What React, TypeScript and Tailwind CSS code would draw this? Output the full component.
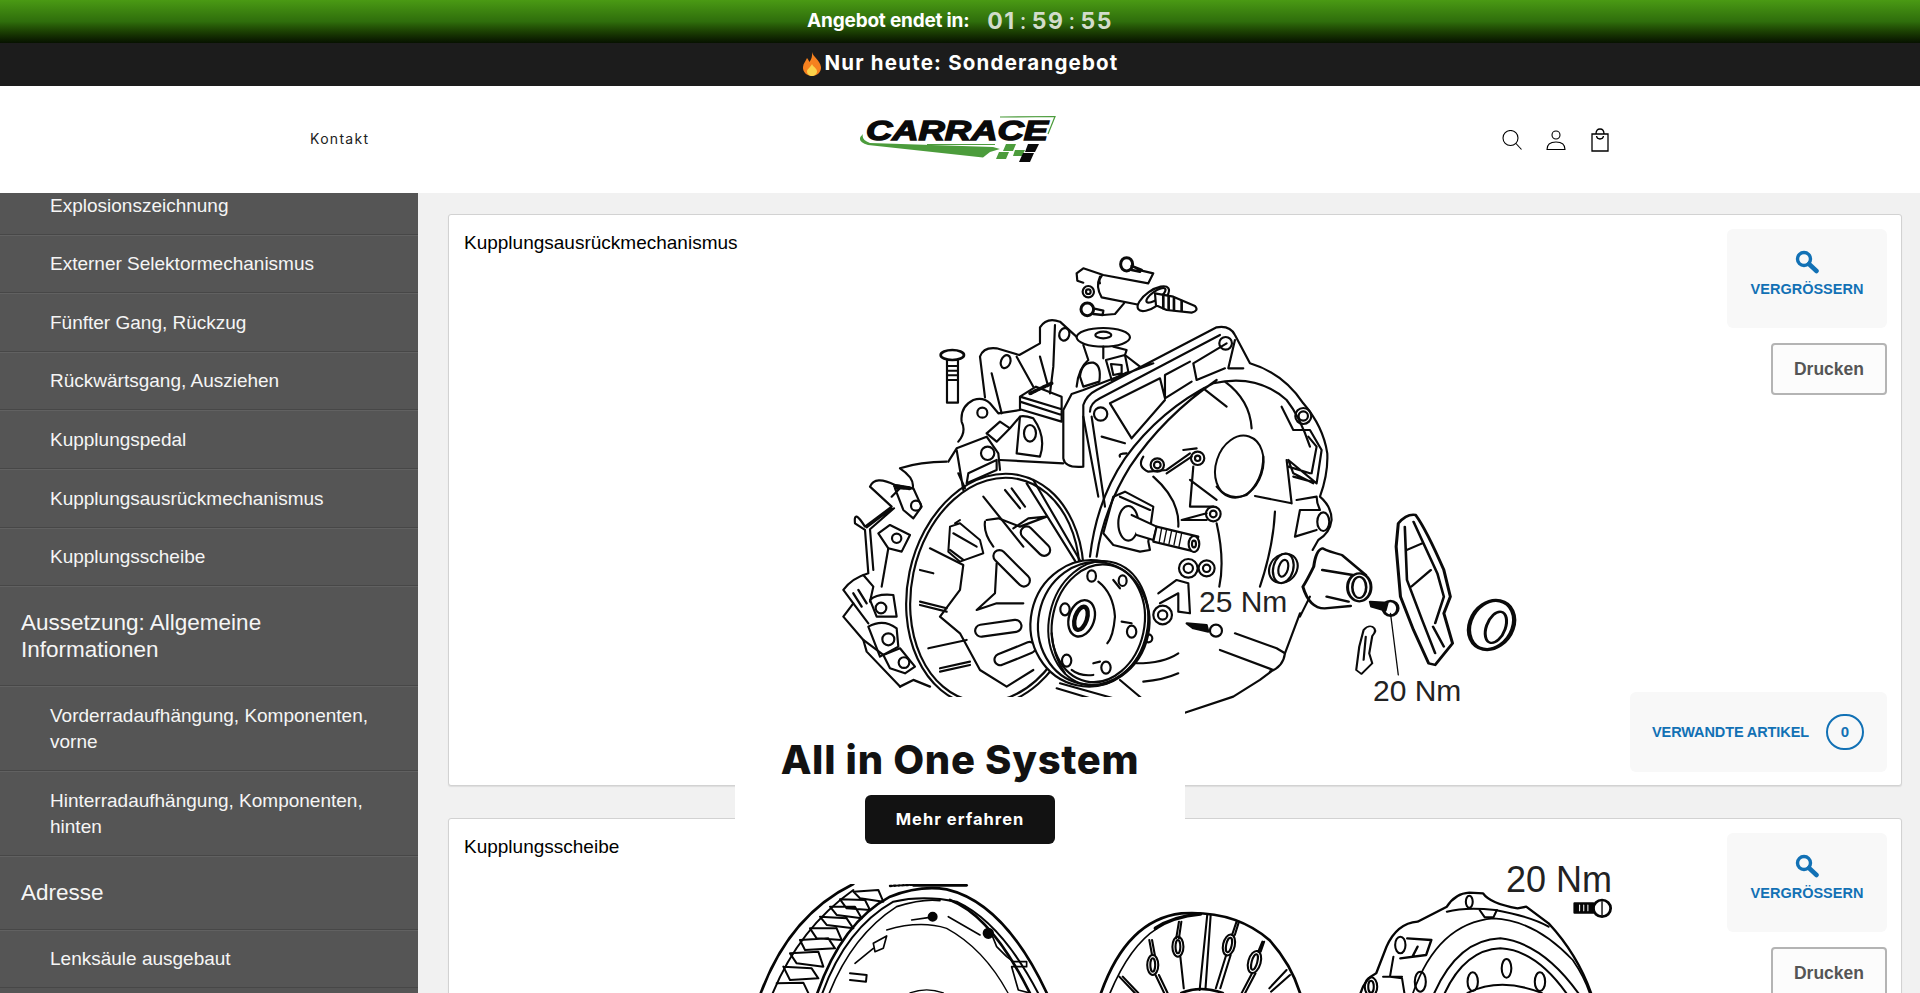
const sidebarRows = [
  { label: "Explosionszeichnung" },
  { label: "Externer Selektormechanismus" },
  { label: "Fünfter Gang, Rückzug" },
  { label: "Rückwärtsgang, Ausziehen" },
  { label: "Kupplungspedal" },
  { label: "Kupplungsausrückmechanismus" },
  { label: "Kupplungsscheibe" },
  { label: "Aussetzung: Allgemeine Informationen", section: true },
  { label: "Vorderradaufhängung, Komponenten, vorne" },
  { label: "Hinterradaufhängung, Komponenten, hinten" },
  { label: "Adresse", section: true },
  { label: "Lenksäule ausgebaut" },
];

const Logo = () => (
  <svg width="206" height="60" viewBox="857 110 206 60">
    <text x="866" y="140" textLength="182" lengthAdjust="spacingAndGlyphs" fontFamily="Liberation Sans, sans-serif" fontWeight="700" fontStyle="italic" fontSize="28" fill="#0a0a0a" stroke="#0a0a0a" strokeWidth="1.4">
      CARRACE
    </text>
    <path d="M1000 117 L1055 116.500 L1048 134" fill="none" stroke="#4c9c3c" strokeWidth="1.200" />
    <path d="M863 134 Q855 141 868 145 L983 157.500 L990 152 L1000 149 L993 147 L870 143 Q861 140 863 134Z" fill="#4c9c3c" />
    <path d="M927 144.500 L995 144.500" stroke="#4c9c3c" strokeWidth="1" />
    <path d="M1006 144 h10 l-3 7 h-10z M1015 150 h10 l-3 6 h-9z M999 152 h10 l-3 7 h-10z" fill="#4c9c3c" />
    <path d="M1028 144 h11 l-4 8 h-10z M1023 153 h11 l-4 9 h-11z" fill="#0a0a0a" />
  </svg>
);

const Flame = () => (
  <svg width="22" height="24" viewBox="0 0 22 24">
    <path d="M11 0 C12 5 19 8 20 15 C20.500 20 16 24 11 24 C6 24 1.500 20 2 15 C2.300 11 5 9 6 6 C7.500 8 8 9 8.500 10 C10.500 7 11.500 4 11 0Z" fill="#f5811f" />
    <path d="M11 12 C12 15 16 16 16 19.500 C16 22 13.500 24 11 24 C8.500 24 6 22 6 19.500 C6 17 9.500 15.500 11 12Z" fill="#fbd24a" />
  </svg>
);

const HeaderIcons = () => (
  <div className="flex items-center justify-end gap-[24px] text-black">
    <svg width="20" height="20" viewBox="0 0 20 20" fill="none" stroke="currentColor" strokeWidth="1.100">
      <circle cx="8.500" cy="8" r="7.500" />
      <path d="M14 13.500 L19.500 19.500" />
    </svg>
    <svg width="20" height="20" viewBox="0 0 20 20" fill="none" stroke="currentColor" strokeWidth="1.100">
      <circle cx="10" cy="5" r="4" />
      <path d="M1 19.500 C1 14 5 12 10 12 C15 12 19 14 19 19.500 Z" />
    </svg>
    <svg width="20" height="24" viewBox="0 0 20 24" fill="none" stroke="currentColor" strokeWidth="1.300">
      <path d="M2 6 H18 V23 H2 Z" />
      <path d="M6 6 C6 2.500 7.500 1 10 1 C12.500 1 14 2.500 14 6" />
      <path d="M6.500 8 C7 12 13 12 13.500 8" />
    </svg>
  </div>
);

const ZoomIcon = () => (
  <svg width="24" height="24" viewBox="0 0 24 24" fill="none" stroke="#1271b5">
    <circle cx="9" cy="9" r="6.500" strokeWidth="3.400" />
    <path d="M14 14 L21.500 21" strokeWidth="4.500" strokeLinecap="round" />
  </svg>
);

const GearboxDrawing = () => (
  <svg width="880" height="570" viewBox="749 215 880 570">
    <g fill="none" stroke="#0a0a0a" strokeLinejoin="round" strokeLinecap="round">
      <g transform="translate(820 240) scale(0.3333)" strokeWidth="6.500">
        {/* slave cylinder */}
        <path d="M770 100 L790 85 L850 105 L985 130 M770 100 L772 122 L790 128 M840 110 Q826 140 845 172 L960 195 M850 225 L885 222 L912 190 M965 92 L1000 100 L985 130 M845 108 Q835 120 840 130" />
        <circle cx="805" cy="155" r="17" />
        <circle cx="805" cy="155" r="7" />
        <ellipse cx="1000" cy="176" rx="55" ry="24" transform="rotate(-35 1000 176)" fill="#fff" />
        <ellipse cx="1008" cy="166" rx="34" ry="12" transform="rotate(-35 1008 166)" />
        <path d="M1005 160 L1060 170 L1125 198 Q1138 212 1115 218 L1040 210 L1008 196 Z" fill="#fff" />
        <path d="M1030 165 V205 M1046 170 V208 M1062 174 V210 M1085 183 V212" strokeWidth="8" />
        <ellipse cx="920" cy="73" rx="18" ry="20" strokeWidth="9" />
        <path d="M935 78 L965 90 M935 90 L960 95" strokeWidth="8" />
        <ellipse cx="802" cy="208" rx="19" ry="19" strokeWidth="9" />
        <path d="M820 205 L850 212 L848 225 L820 222" strokeWidth="7" />
        {/* loose bolt */}
        <ellipse cx="397" cy="345" rx="35" ry="15" strokeWidth="8" />
        <path d="M381 362 V488 H414 V362" />
        <path d="M381 378 H414 M381 392 H414 M381 406 H414 M381 420 H414" strokeWidth="6" />
        {/* upper housing */}
        <path d="M415 605 Q440 575 425 545 Q420 500 460 480 Q490 470 510 490 L535 520 L600 510" />
        <circle cx="487" cy="518" r="15" />
        <path d="M495 472 L480 350 Q490 320 530 325 L598 345 L660 310 L660 262 Q680 230 720 245 L775 295" />
        <ellipse cx="557" cy="365" rx="14" ry="20" transform="rotate(20 557 365)" />
        <ellipse cx="733" cy="283" rx="15" ry="19" transform="rotate(15 733 283)" />
        <path d="M590 350 L640 440 M705 255 L700 380 L690 460 M660 350 L682 430 M545 520 L515 400" />
        <ellipse cx="850" cy="292" rx="80" ry="28" fill="#fff" />
        <ellipse cx="850" cy="285" rx="24" ry="10" />
        <path d="M790 315 L805 360 Q775 385 770 440 M850 320 V355 M880 320 L920 330 L915 345 L960 380" />
        <path d="M780 410 Q785 365 820 368 Q845 375 838 425 L790 440Z" />
        <path d="M858 360 L915 345 L925 395 L875 420 Z M873 372 L905 375 L905 400 L880 405 Z" />
        <path d="M600 470 L600 508 L725 545 L725 508 L600 470 L648 440 L725 470 L725 508 M600 485 L725 525 M632 462 L695 428" />
        <path d="M630 460 L695 430" strokeWidth="11" strokeDasharray="7 7" />
        <path d="M600 530 L590 640 L660 650 Q680 590 640 535 Q610 525 600 530Z" />
        <ellipse cx="630" cy="580" rx="18" ry="25" />
        <path d="M500 580 L540 545 L570 565 L530 605Z M570 565 L600 530" />
        {/* bell housing flange */}
        <path d="M790 680 Q735 685 730 655 L730 510 L755 462 L790 450 L1000 370 M790 680 L790 495 Q800 465 830 450 L1190 262 Q1230 255 1245 285 L1290 370 Q1390 400 1450 490 Q1510 560 1522 640 Q1525 700 1500 770 Q1535 800 1535 840 Q1530 880 1495 900 L1478 930" />
        <path d="M810 515 Q810 490 840 475 L1200 285 M1245 300 L1225 385 L1270 385 M1220 310 L1120 370 L1130 420 L1215 385 M1110 365 L1035 405 L1035 475 L1115 425 M1020 415 L870 490 L935 595 L1035 480 M1020 415 L1035 475" />
        <circle cx="1217" cy="310" r="19" />
        <circle cx="842" cy="522" r="20" />
        <circle cx="1450" cy="528" r="24" />
        <circle cx="1450" cy="528" r="14" />
        <path d="M815 530 L855 800 M790 530 L835 770 M845 590 L915 610 M920 640 Q895 640 900 650" />
        <path d="M810 950 Q830 780 915 655 Q1020 510 1180 430 Q1310 400 1400 480 Q1440 530 1470 620 M830 950 Q850 810 930 680 Q1030 530 1190 420 M1215 425 Q1290 480 1295 565 M1150 445 L1220 500" />
        <path d="M1385 500 L1420 570 L1470 570 L1505 630 L1490 730 L1405 660 L1420 700 L1480 730 M1465 590 L1490 620 L1475 700 M1405 680 L1470 700 M1420 710 L1475 725" />
        <ellipse cx="1258" cy="680" rx="70" ry="95" transform="rotate(18 1258 680)" strokeWidth="6" />
        <path d="M1190 740 Q1225 785 1280 765 Q1330 720 1330 650" />
        <path d="M1305 768 L1415 790 M1415 790 L1400 660" />
        <path d="M1430 780 L1490 770 Q1490 790 1500 810 L1440 810 L1425 890 L1490 870" />
        <ellipse cx="1510" cy="845" rx="18" ry="28" />
        <path d="M1365 815 Q1360 920 1320 1040" />
        <ellipse cx="1390" cy="985" rx="30" ry="45" transform="rotate(15 1390 985)" />
        <ellipse cx="1390" cy="985" rx="14" ry="26" transform="rotate(15 1390 985)" />
        <path d="M1190 850 Q1215 960 1198 1040 M1245 1180 L1370 1225 L1395 1240 L1440 1120" />
        <path d="M1200 1230 L1360 1290 L1320 1320 L1240 1370 L1090 1420 M1395 1240 Q1390 1280 1350 1295 M1470 1070 L1440 1130" />
        {/* small linkage */}
        <path d="M970 650 Q950 680 985 695 L1040 690 L1110 640 M1040 700 L1115 650 M1090 630 L1130 625 M1120 680 L1110 800 L1180 800 M1110 720 L1190 780" />
        <circle cx="1012" cy="675" r="20" />
        <circle cx="1012" cy="675" r="10" />
        <circle cx="1133" cy="655" r="20" />
        <circle cx="1133" cy="655" r="8" />
        <path d="M1000 710 Q1080 780 1075 860" />
        <circle cx="1180" cy="822" r="22" />
        <circle cx="1180" cy="822" r="10" />
        <path d="M1160 820 L1085 840 M1160 840 L1090 840" />
        {/* left housing */}
        <path d="M380 665 Q300 665 240 685 Q285 715 278 745 L225 735 Q165 705 150 740 L215 800 L135 860 Q100 805 105 850 L135 870 L145 1000 Q95 1015 70 1050 L100 1090 L70 1130 L130 1200 L140 1235 L240 1340" />
        <path d="M215 805 L140 862 M222 805 L150 868 L160 990 M130 1005 L160 1040 L150 1085 M100 1090 L145 1150 M130 1200 L190 1245" />
        <path d="M385 665 L410 625 L500 590 L535 640 L540 690 M410 630 L430 750 M415 700 L435 745 M445 700 L530 660 L530 690 L440 730 Z" />
        <circle cx="503" cy="640" r="20" />
        <path d="M540 660 L730 670" />
        <path d="M240 745 L215 770 M225 745 H280 L305 800 L280 835 L250 810 Z" />
        <circle cx="288" cy="797" r="15" />
        <path d="M225 738 L270 745" strokeWidth="12" strokeDasharray="4 4" />
        <path d="M175 880 L210 855 L270 885 L245 935 L205 925 Z" />
        <circle cx="230" cy="895" r="14" />
        <path d="M205 925 L185 1040" />
        <path d="M150 1080 Q170 1060 220 1065 L230 1130 L170 1130 Z" />
        <circle cx="183" cy="1104" r="16" />
        <path d="M145 1160 Q190 1135 230 1165 L235 1220 L180 1250 Z" />
        <circle cx="205" cy="1198" r="18" />
        <path d="M190 1245 L240 1225 L285 1280 L255 1300 L210 1285 Z" />
        <circle cx="252" cy="1268" r="16" />
        <path d="M100 1060 L125 1100 M115 1050 L140 1090 M240 1340 L280 1320 L330 1340" strokeWidth="7" />
        {/* big ring and inner parts */}
        <ellipse cx="525" cy="1050" rx="250" ry="340" transform="rotate(12 525 1050)" />
        <ellipse cx="525" cy="1050" rx="262" ry="352" transform="rotate(12 525 1050)" />
        <path d="M490 770 L610 920 M555 750 L600 805 M575 745 L615 800 M640 720 L785 970 M620 730 L770 970" />
        <path d="M330 925 L430 975 L420 1050 L360 1130 L420 1180 L480 1290 L560 1340 L640 1290 M500 840 L535 835 L600 860 L680 830 L625 835 L580 865 M495 845 Q490 880 520 920 M530 970 L525 1060 L470 1110 L530 1090 L610 1090" />
        <path d="M390 860 L420 850 L480 900 L490 940 L420 965 L385 935 Z M405 850 L420 840" strokeWidth="6" />
        <path d="M390 930 L430 960 M400 880 L470 920" />
        <g transform="rotate(45 645 905)"><rect x="590" y="885" width="110" height="36" rx="18" /></g>
        <g transform="rotate(45 575 985)"><rect x="505" y="967" width="140" height="36" rx="18" /></g>
        <g transform="rotate(-8 535 1165)"><rect x="465" y="1147" width="140" height="36" rx="18" /></g>
        <g transform="rotate(-22 590 1240)"><rect x="520" y="1222" width="130" height="34" rx="17" /></g>
        <path d="M300 1085 L380 1105 M300 1095 L380 1115 M300 990 L340 1000 M325 1225 L440 1200 M360 1285 L450 1265 M360 1295 L450 1275" />
        {/* shaft */}
        <path d="M880 770 L915 755 L1000 800 L985 905 L990 930 L960 935 L880 915 L850 880 Z M900 770 L990 810" />
        <ellipse cx="925" cy="850" rx="30" ry="52" fill="#fff" />
        <path d="M935 825 L1010 860 L1000 900 L950 885" fill="#fff" />
        <path d="M1010 860 L1135 890 L1125 935 L1000 905 Z" fill="#fff" />
        <path d="M1025 865 L1018 905 M1040 868 L1032 908 M1055 872 L1047 912 M1070 875 L1062 915 M1085 880 L1077 920" strokeWidth="4" />
        <ellipse cx="1122" cy="912" rx="16" ry="24" fill="#fff" />
        <ellipse cx="1122" cy="912" rx="6" ry="10" />
        <path d="M1015 1060 L1070 1020 L1105 1030 L1110 1120 L1075 1115 L1075 1060 L1020 1090" />
        <circle cx="1105" cy="985" r="28" />
        <circle cx="1105" cy="985" r="14" />
        <circle cx="1160" cy="985" r="24" />
        <circle cx="1160" cy="985" r="11" />
        <circle cx="1028" cy="1125" r="28" />
        <circle cx="1028" cy="1125" r="14" />
        <path d="M1100 1150 L1160 1155 L1165 1175 L1120 1165 Z" fill="#0a0a0a" />
        <circle cx="1188" cy="1172" r="18" />
        <circle cx="985" cy="1195" r="12" />
        <path d="M950 1270 Q1030 1270 1075 1240 M970 1325 Q1030 1320 1075 1300 M900 1320 L965 1375 M720 1330 L880 1375 M710 1345 L860 1390" />
        {/* clutch disc */}
        <ellipse cx="810" cy="1150" rx="178" ry="190" transform="rotate(12 810 1150)" fill="#fff" />
        <ellipse cx="835" cy="1150" rx="148" ry="188" transform="rotate(12 835 1150)" fill="#fff" strokeWidth="6" />
        <ellipse cx="835" cy="1150" rx="138" ry="178" transform="rotate(12 835 1150)" />
        <ellipse cx="820" cy="1150" rx="165" ry="185" transform="rotate(12 820 1150)" />
        <ellipse cx="785" cy="1135" rx="38" ry="56" transform="rotate(18 785 1135)" strokeWidth="7" />
        <ellipse cx="783" cy="1135" rx="18" ry="36" transform="rotate(18 783 1135)" strokeWidth="13" />
        <ellipse cx="815" cy="1008" rx="13" ry="17" />
        <ellipse cx="908" cy="1022" rx="12" ry="16" />
        <ellipse cx="735" cy="1108" rx="14" ry="18" />
        <ellipse cx="935" cy="1175" rx="14" ry="18" />
        <ellipse cx="740" cy="1262" rx="14" ry="18" />
        <ellipse cx="858" cy="1283" rx="14" ry="18" />
        <path d="M835 1025 Q880 1060 885 1130 Q880 1190 862 1210 M880 1020 L900 1045 M905 1145 L935 1150 M820 1270 L840 1265 M755 1290 Q780 1310 820 1305 M695 1180 Q700 1250 735 1300" />
      </g>
      <g transform="translate(1240 480) scale(0.4337 0.3333)" strokeWidth="6">
        {/* release bearing and fork */}
        <path d="M145 320 Q155 300 170 260 Q175 210 190 205 Q205 215 235 225 L290 285 M190 270 L260 285 M200 350 L250 365 M145 320 Q160 385 195 385 L255 378" strokeWidth="7" />
        <ellipse cx="275" cy="322" rx="27" ry="42" fill="#fff" strokeWidth="7" />
        <ellipse cx="275" cy="322" rx="16" ry="32" />
        <path d="M300 365 L340 368 L335 392 L303 380 Z" fill="#0a0a0a" />
        <ellipse cx="347" cy="385" rx="17" ry="22" strokeWidth="8" />
        <path d="M347 400 L365 585" strokeWidth="3" />
        <path d="M305 440 Q318 450 305 468 L298 520 L305 550 L280 582 L268 570 L275 500 L285 450 Q295 435 305 440Z M290 470 L285 540" strokeWidth="5" />
        <path d="M365 130 Q385 100 405 105 Q430 150 470 270 L485 350 L470 400 L490 490 L450 555 L435 550 L400 450 L370 350 L360 200 Z" strokeWidth="7" />
        <path d="M380 140 L385 300 L420 420 M400 125 L455 280 L470 350 L450 430 M385 210 L420 190 M395 320 L440 270 M445 440 L470 500 M420 420 L450 520" />
        <ellipse cx="580" cy="435" rx="50" ry="75" transform="rotate(15 580 435)" strokeWidth="10" />
        <ellipse cx="590" cy="442" rx="22" ry="48" transform="rotate(15 590 442)" strokeWidth="7" />
        <ellipse cx="100" cy="265" rx="32" ry="45" transform="rotate(15 100 265)" strokeWidth="5" />
      </g>
      <text x="1199" y="612" fontFamily="Liberation Sans, sans-serif" fontSize="30" fill="#222" stroke="none">25 Nm</text>
      <text x="1373" y="701" fontFamily="Liberation Sans, sans-serif" fontSize="30" fill="#222" stroke="none">20 Nm</text>
    </g>
  </svg>
);

const ClutchDrawing = () => (
  <svg width="880" height="570" viewBox="749 819 880 570">
    <g fill="none" stroke="#050505" strokeLinejoin="round" strokeLinecap="round">
      <g transform="translate(740 860) scale(0.3333)" strokeWidth="6">
        {/* flywheel */}
        <path d="M55 420 Q140 170 340 72" strokeWidth="8" />
        <path d="M90 420 Q170 210 340 90" />
        <path d="M110 370 L190 368 L215 420 M130 320 L215 325 L235 355 L150 360 L130 320 M150 280 L235 275 L250 320 L170 310 Z M180 240 L265 235 L285 265 L195 270 Z M210 205 L290 205 L305 240 L230 235 Z M240 170 L320 175 L340 205 L260 195 Z M270 140 L345 140 L365 175 L290 165 Z M300 118 L375 120 L390 150 L320 145 Z M340 95 L415 90 L430 125 L360 115 Z" />
        <path d="M225 420 Q300 190 450 110 Q540 75 620 88 Q800 130 930 420" strokeWidth="8" />
        <path d="M240 420 Q310 210 460 125 Q550 105 650 125 Q790 190 905 420" />
        <path d="M260 420 Q330 230 470 140 Q550 115 600 122" strokeWidth="5" />
        <path d="M630 120 Q760 170 880 420" strokeWidth="8" />
        <path d="M440 210 Q540 180 620 205 Q740 270 815 420" strokeWidth="4" />
        <path d="M515 180 L570 172 M625 170 L720 225 M750 210 L770 260 L800 290 L820 305 L860 305 L860 320 L815 320 L835 390 L870 399" strokeWidth="5" />
        <circle cx="745" cy="220" r="14" fill="#050505" />
        <circle cx="578" cy="170" r="12" fill="#050505" />
        <path d="M330 340 L380 345 L378 365 L330 360" />
        <path d="M400 250 L440 228 L430 265 L405 275 Z M345 310 L400 265" strokeWidth="5" />
        <path d="M520 76 H680" strokeWidth="8" />
        <path d="M450 78 L520 74" strokeWidth="7" strokeDasharray="6 6" />
        <path d="M510 399 Q560 380 610 399" strokeWidth="4" />
      </g>
      <g transform="translate(1090 860) scale(0.3448 0.3333)" strokeWidth="6">
        {/* clutch disc */}
        <path d="M25 420 Q100 180 265 160 Q420 150 520 240 Q590 320 615 420" strokeWidth="8" />
        <path d="M50 420 Q110 260 195 205" strokeWidth="5" />
        <path d="M190 205 Q240 170 320 162" strokeWidth="11" />
        <path d="M340 165 L318 390 M350 165 L335 385" />
        <path d="M258 185 L250 235 M265 185 L258 235 M262 290 L272 385 M172 240 L180 285 M180 240 L188 285 M190 345 L215 399 M200 345 L225 399 M425 185 L412 225 M432 185 L420 225 M395 285 L365 385 M408 285 L378 385 M500 245 L488 275 M505 245 L495 275 M470 340 L440 399 M480 340 L450 399 M570 330 L520 385 M580 345 L525 395 M85 350 L130 399 M95 350 L140 399" />
        <ellipse cx="182" cy="315" rx="16" ry="30" />
        <ellipse cx="182" cy="315" rx="7" ry="20" />
        <ellipse cx="255" cy="260" rx="16" ry="30" />
        <ellipse cx="255" cy="260" rx="7" ry="20" />
        <ellipse cx="403" cy="255" rx="17" ry="32" transform="rotate(12 403 255)" />
        <ellipse cx="403" cy="255" rx="8" ry="22" transform="rotate(12 403 255)" />
        <ellipse cx="477" cy="306" rx="18" ry="34" transform="rotate(15 477 306)" />
        <ellipse cx="477" cy="306" rx="8" ry="24" transform="rotate(15 477 306)" />
        <path d="M265 399 Q320 375 385 399" strokeWidth="8" />
        {/* pressure plate */}
        <path d="M780 420 Q790 360 830 340 L860 260 Q890 190 950 185 L1035 140 Q1060 100 1100 98 L1140 100 Q1160 130 1240 145 L1265 140 L1330 190 Q1420 290 1460 420" strokeWidth="7" />
        <path d="M1035 155 Q1090 140 1175 150 Q1280 170 1330 200" />
        <path d="M930 420 Q1000 190 1170 175 Q1290 180 1400 300 Q1440 360 1455 420" strokeWidth="5" />
        <path d="M990 420 Q1060 240 1190 235 Q1320 250 1430 420" strokeWidth="6" />
        <path d="M1020 420 Q1080 270 1190 265 Q1300 270 1395 420" strokeWidth="6" />
        <path d="M1095 399 Q1190 350 1310 399" strokeWidth="6" />
        <path d="M1130 150 L1145 172 L1170 172 L1180 150" />
        <ellipse cx="1100" cy="125" rx="10" ry="18" />
        <ellipse cx="1208" cy="325" rx="14" ry="28" />
        <ellipse cx="1110" cy="365" rx="15" ry="28" />
        <ellipse cx="1305" cy="365" rx="15" ry="28" />
        <ellipse cx="900" cy="255" rx="15" ry="25" />
        <path d="M920 235 L990 240 L975 285 L900 295 M950 260 L935 290" strokeWidth="7" />
        <path d="M880 290 L870 350 L905 355 L915 420 M850 350 L905 350" />
        <ellipse cx="815" cy="380" rx="18" ry="28" />
        <ellipse cx="815" cy="380" rx="8" ry="18" />
        <ellipse cx="958" cy="365" rx="16" ry="30" />
        <circle cx="1485" cy="145" r="25" strokeWidth="8" />
        <path d="M1405 130 H1460 V158 H1405 Z" fill="#050505" />
        <path d="M1420 135 V152 M1432 135 V152 M1444 135 V152" stroke="#fff" strokeWidth="3" />
        <path d="M1485 125 V165" strokeWidth="4" />
      </g>
      <text x="1506" y="892" fontFamily="Liberation Sans, sans-serif" fontSize="36" fill="#222" stroke="none">20 Nm</text>
    </g>
  </svg>
);

const DiagramCard = ({ title, children }: { title: string; children: React.ReactNode }) => (
  <div className="flex h-[572px] shrink-0 rounded-[3px] border border-[#d2d2d2] bg-white shadow-[0_1px_1px_#dddddd]">
    <div className="w-[300px] shrink-0 pl-[15px] pt-[16px] text-[19px] leading-[24px] text-black">{title}</div>
    <div className="w-[880px] shrink-0">{children}</div>
    <div className="flex w-[272px] shrink-0 flex-col items-end justify-between pb-[13px] pr-[14px] pt-[14px]">
      <div className="flex flex-col items-end gap-[15px]">
        <div className="flex h-[99px] w-[160px] flex-col items-center rounded-[6px] bg-[#f8f8f8] pt-[21px] text-[#1271b5]">
          <ZoomIcon />
          <span className="mt-[6px] text-[14.5px] font-bold leading-[18px]">VERGRÖSSERN</span>
        </div>
        <button className="h-[52px] w-[116px] rounded-[4px] border-2 border-[#b4b4b4] bg-[#fcfcfc] text-[17.5px] font-bold text-[#555555]">Drucken</button>
      </div>
      <div className="flex h-[80px] w-[257px] items-center rounded-[6px] bg-[#f8f8f8] pl-[22px] text-[#1271b5]">
        <span className="w-[174px] text-[14.5px] font-bold leading-[18px] tracking-[-0.1px]">VERWANDTE ARTIKEL</span>
        <span className="flex h-[36px] w-[38px] items-center justify-center rounded-full border-2 border-[#1271b5] text-[15px] font-bold">0</span>
      </div>
    </div>
  </div>
);

export default function App() {
  return (
    <div className="relative flex h-[993px] flex-col overflow-hidden bg-[#f1f1f1] font-['Liberation_Sans',sans-serif]">
      <div className="flex h-[43px] shrink-0 items-center justify-center bg-linear-to-b from-[#4a9a14] via-[#2f6e0c] to-[#071200] font-['Inter',sans-serif] text-white">
        <span className="mr-[18px] text-[19px] font-bold tracking-[-0.2px]">Angebot endet in:</span>
        <span className="text-[23px] font-bold tracking-[1.5px] text-[#d3dccb] [word-spacing:-3px]">01 <span className="font-normal">:</span> 59 <span className="font-normal">:</span> 55</span>
      </div>
      <div className="flex h-[43px] shrink-0 items-center justify-center bg-[#1c1c1c] pb-[2px] font-['Inter',sans-serif] text-[20.5px] font-bold tracking-[1.2px] text-white">
        <Flame />
        <span className="ml-[1px]">Nur heute: Sonderangebot</span>
      </div>
      <header className="flex h-[107px] shrink-0 items-center justify-center bg-white">
        <div className="grid w-[1300px] grid-cols-[1fr_auto_1fr] items-center">
          <a className="pb-[2px] font-['Inter',sans-serif] text-[14px] tracking-[1.3px] text-[#222222]">Kontakt</a>
          <Logo />
          <HeaderIcons />
        </div>
      </header>
      <div className="flex min-h-0 flex-1">
        <aside className="w-[418px] shrink-0 overflow-hidden bg-[#555555] text-[#f5f5f5]">
          <div className="mt-[-17px]">
            {sidebarRows.map((row) =>
              row.section ? (
                <div key={row.label} className="border-b border-[#474747] pb-[22px] pl-[21px] pr-[60px] pt-[24px] text-[22.5px] leading-[26.5px] shadow-[inset_0_1px_0_#616161]">
                  {row.label}
                </div>
              ) : (
                <div key={row.label} className="border-b border-[#474747] pb-[14.55px] pl-[50px] pr-[30px] pt-[16.55px] text-[19px] leading-[26.5px] shadow-[inset_0_1px_0_#616161]">
                  {row.label}
                </div>
              )
            )}
          </div>
        </aside>
        <main className="flex min-w-0 flex-1 flex-col gap-[32px] overflow-hidden pl-[30px] pr-[18px] pt-[21px]">
          <DiagramCard title="Kupplungsausrückmechanismus">
            <GearboxDrawing />
          </DiagramCard>
          <DiagramCard title="Kupplungsscheibe">
            <ClutchDrawing />
          </DiagramCard>
        </main>
      </div>
      <div className="absolute left-[735px] top-[697px] flex h-[187px] w-[450px] flex-col items-center bg-white pt-[40px] font-['Inter',sans-serif]">
        <h2 className="text-[40px] font-extrabold leading-[46px] tracking-[0.7px] text-[#121212]">All in One System</h2>
        <button className="mt-[12px] h-[49px] w-[190px] rounded-[6px] bg-[#121212] text-[16.5px] font-bold tracking-[1px] text-white">Mehr erfahren</button>
      </div>
    </div>
  );
}
